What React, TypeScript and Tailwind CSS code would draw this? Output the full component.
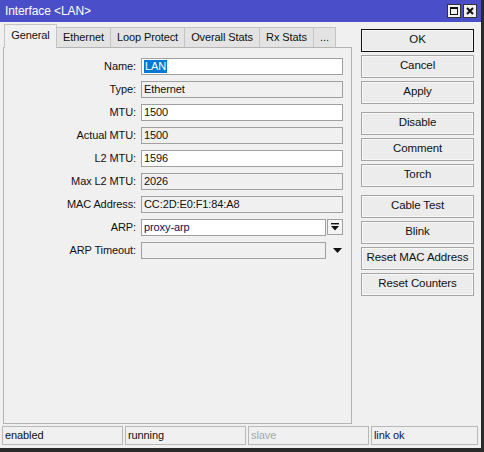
import React from "react";

const tabs = [
  { label: "General", w: "w-[53px]", active: true },
  { label: "Ethernet", w: "w-[54px]" },
  { label: "Loop Protect", w: "w-[74px]" },
  { label: "Overall Stats", w: "w-[75px]" },
  { label: "Rx Stats", w: "w-[54px]" },
  { label: "...", w: "w-[22px]" },
];

const rows: { label: string; value: string; editable?: boolean; selected?: boolean; kind?: "combo" | "drop" }[] = [
  { label: "Name:", value: "LAN", editable: true, selected: true },
  { label: "Type:", value: "Ethernet" },
  { label: "MTU:", value: "1500", editable: true },
  { label: "Actual MTU:", value: "1500" },
  { label: "L2 MTU:", value: "1596", editable: true },
  { label: "Max L2 MTU:", value: "2026" },
  { label: "MAC Address:", value: "CC:2D:E0:F1:84:A8" },
  { label: "ARP:", value: "proxy-arp", editable: true, kind: "combo" },
  { label: "ARP Timeout:", value: "", kind: "drop" },
];

const buttonGroups = [
  ["OK", "Cancel", "Apply"],
  ["Disable", "Comment", "Torch"],
  ["Cable Test", "Blink", "Reset MAC Address", "Reset Counters"],
];

const Field: React.FC<{ row: (typeof rows)[number] }> = ({ row }) => {
  const box = (
    <div
      className={`h-[17px] flex items-center pl-[2px] border border-[#a0a0a0] ${
        row.editable ? "bg-white" : "bg-[#f0f0f0]"
      } ${row.kind ? "w-[185px]" : "w-[202px]"}`}
    >
      {row.selected ? (
        <span className="bg-[#0078d7] text-white px-[1px] leading-[13px]">{row.value}</span>
      ) : (
        <span className={row.kind === "combo" ? "text-[#101050]" : "text-[#111]"}>{row.value}</span>
      )}
    </div>
  );
  return (
    <div className="flex items-center h-[17px]">
      <div className="w-[133px] text-right pr-[1px] text-[#111]">{row.label}</div>
      <div className="ml-[4px] flex items-center">
        {box}
        {row.kind === "combo" && (
          <div className="ml-[1px] w-[16px] h-[16px] border border-[#a0a0a0] bg-[#f4f4f4] flex items-center justify-center">
            <svg width="8" height="8" viewBox="0 0 8 8">
              <rect x="0" y="0" width="8" height="1.4" fill="#111" />
              <path d="M0 3 L8 3 L4 7.5 Z" fill="#111" />
            </svg>
          </div>
        )}
        {row.kind === "drop" && (
          <div className="ml-[1px] w-[16px] h-[16px] flex items-center justify-center">
            <svg width="9" height="5" viewBox="0 0 9 5" className="ml-[4px]">
              <path d="M0 0 L9 0 L4.5 5 Z" fill="#111" />
            </svg>
          </div>
        )}
      </div>
    </div>
  );
};

export default function App() {
  return (
    <div className="w-[484px] h-[452px] bg-[#2a2a2a] font-['Liberation_Sans',Arial,sans-serif] text-[11px] tracking-[-0.1px] select-none">
      <div className="w-[481px] h-[448px] bg-[#f0f0f0] flex flex-col">
        {/* title bar */}
        <div className="h-[22px] bg-[#4a4fc9] flex items-center pl-[5px] pr-[4px] text-white text-[12px]">
          <span className="flex-1">{"Interface <LAN>"}</span>
          <div className="flex gap-[2px]">
            <div className="w-[14px] h-[14px] bg-[#f0f0f0] border border-[#333] flex items-center justify-center">
              <div className="w-[8px] h-[8px] border border-[#111] border-t-2" />
            </div>
            <div className="w-[14px] h-[14px] bg-[#f0f0f0] border border-[#333] flex items-center justify-center">
              <svg width="8" height="8" viewBox="0 0 8 8">
                <path d="M1 1 L7 7 M7 1 L1 7" stroke="#111" strokeWidth="2" />
              </svg>
            </div>
          </div>
        </div>

        <div className="flex flex-1">
          {/* left: tabs + panel */}
          <div className="ml-[3px] w-[349px] flex flex-col">
            <div className="h-[25px] flex items-end pl-[1px] relative z-10">
              {tabs.map((t) =>
                t.active ? (
                  <div
                    key={t.label}
                    className={`${t.w} h-[24px] -mb-[1px] bg-[#f0f0f0] border border-b-0 border-[#c4c4c4] flex items-center justify-center text-[#111] pb-[2px]`}
                  >
                    {t.label}
                  </div>
                ) : (
                  <div
                    key={t.label}
                    className={`${t.w} h-[20px] bg-[#e3e3e3] border-t border-r border-[#c4c4c4] flex items-center justify-center text-[#111]`}
                  >
                    {t.label}
                  </div>
                ),
              )}
            </div>
            <div className="h-[377px] border border-[#b4b4b4] bg-[#f0f0f0] pt-[10px] flex flex-col gap-[6px]">
              {rows.map((r) => (
                <Field key={r.label} row={r} />
              ))}
            </div>
          </div>

          {/* right: buttons */}
          <div className="ml-[9px] w-[113px] pt-[7px] flex flex-col gap-[8px]">
            {buttonGroups.map((g, gi) => (
              <div key={gi} className="flex flex-col gap-[3px]">
                {g.map((b) => (
                  <div
                    key={b}
                    className={`h-[23px] flex items-center justify-center text-[11.5px] text-[#111] bg-[#ececec] border ${
                      b === "OK" ? "border-[#111]" : "border-[#a5a5a5]"
                    } shadow-[inset_0_0_0_1px_#f8f8f8]`}
                  >
                    {b}
                  </div>
                ))}
              </div>
            ))}
          </div>
        </div>

        {/* status bar */}
        <div className="h-[25px] flex items-start pt-[2px] pl-[2px] gap-[2px]">
          {[
            { t: "enabled", c: "text-[#111]", w: "w-[121px]" },
            { t: "running", c: "text-[#111]", w: "w-[121px]" },
            { t: "slave", c: "text-[#a8a8a8]", w: "w-[121px]" },
            { t: "link ok", c: "text-[#101050]", w: "w-[107px]" },
          ].map((s) => (
            <div key={s.t} className={`${s.w} h-[19px] border border-[#b8b8b8] flex items-center pl-[2px] ${s.c}`}>
              {s.t}
            </div>
          ))}
        </div>
      </div>
    </div>
  );
}
